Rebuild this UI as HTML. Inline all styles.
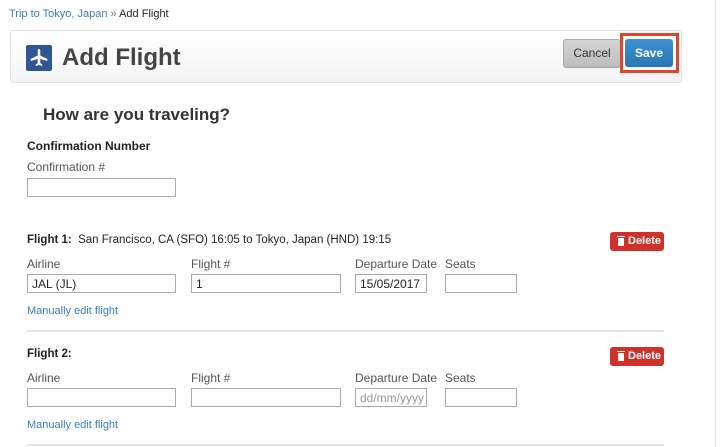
<!DOCTYPE html>
<html><head><style>
*{box-sizing:border-box;margin:0;padding:0}
body{width:720px;height:447px;overflow:hidden;background:#fff;font-family:"Liberation Sans",sans-serif;color:#222;position:relative}
.a{position:absolute;white-space:nowrap}
.lnk{color:#3a7fc4}
.inp{position:absolute;height:19px;border:1px solid #aaa;background:#fff;font-size:12px;padding:2px 4px;line-height:14px}
.lbl{position:absolute;font-size:12px;color:#555}
.del{position:absolute;width:54px;height:19px;background:#d0322b;border-radius:3px;color:#fff;font-size:11px;font-weight:bold;line-height:19px;white-space:nowrap}
.del i{position:absolute;left:8px;top:6px;width:6px;height:8px;background:#fff;border-radius:0 0 1px 1px}
.del i:before{content:"";position:absolute;left:-1px;top:-2px;width:8px;height:1px;background:#fff}
.del span{position:absolute;left:18px;top:0}
.hr{position:absolute;left:27px;width:637px;height:2px;background:#e3e3e3}
</style></head><body>
<div class="a" style="left:9px;top:8px;font-size:11px"><span class="lnk">Trip to Tokyo, Japan</span> <span style="color:#777">»</span> Add Flight</div>
<div style="position:absolute;left:10px;top:30px;width:672px;height:53px;border:1px solid #e2e2e2;border-radius:3px;background:linear-gradient(#fff,#f4f4f4)"></div>
<div style="position:absolute;left:26px;top:45px;width:26px;height:26px;background:#2f5597;border-radius:2px">
<svg width="26" height="26" viewBox="0 0 26 26"><path d="M13 4c1 0 1.3 1 1.3 2v4.5l7 3.5v2l-7-2v4l2 1.5v1.5l-3.3-1-3.3 1v-1.5l2-1.5v-4l-7 2v-2l7-3.5V6c0-1 .3-2 1.3-2z" fill="#fff"/></svg></div>
<div class="a" style="left:62px;top:44px;font-size:24px;font-weight:bold;color:#444">Add Flight</div>
<div class="a" style="left:563px;top:39px;width:58px;height:29px;border:1px solid #a9a9a9;border-radius:3px;background:linear-gradient(#d4d4d4,#bdbdbd);font-size:12px;line-height:27px;text-align:center;color:#333">Cancel</div>
<div class="a" style="left:620px;top:33px;width:59px;height:40px;border:3px solid #e2452c"></div>
<div class="a" style="left:625px;top:39px;width:48px;height:28px;border-radius:3px;background:linear-gradient(#3e91cf,#2a77b5);font-size:12px;font-weight:bold;line-height:28px;text-align:center;color:#fff">Save</div>
<div style="position:absolute;left:715px;top:0;width:1px;height:447px;background:#e8e8e8"></div>
<div class="a" style="left:43px;top:105px;font-size:17px;font-weight:bold;color:#333">How are you traveling?</div>
<div class="a" style="left:27px;top:139px;font-size:12px;font-weight:bold">Confirmation Number</div>
<div class="lbl" style="left:27px;top:160px">Confirmation #</div>
<div class="inp" style="left:27px;top:178px;width:149px"></div>

<div class="a" style="left:27px;top:234px;font-size:11.5px"><b>Flight 1:</b>&nbsp; San Francisco, CA (SFO) 16:05 to Tokyo, Japan (HND) 19:15</div>
<div class="del" style="left:610px;top:232px"><i></i><span>Delete</span></div>
<div class="lbl" style="left:27px;top:257px">Airline</div>
<div class="lbl" style="left:191px;top:257px">Flight #</div>
<div class="lbl" style="left:355px;top:257px">Departure Date</div>
<div class="lbl" style="left:445px;top:257px">Seats</div>
<div class="inp" style="left:27px;top:274px;width:149px">JAL (JL)</div>
<div class="inp" style="left:191px;top:274px;width:150px">1</div>
<div class="inp" style="left:355px;top:274px;width:72px">15/05/2017</div>
<div class="inp" style="left:445px;top:274px;width:72px"></div>
<div class="a lnk" style="left:27px;top:305px;font-size:11px">Manually edit flight</div>
<div class="hr" style="top:330px"></div>

<div class="a" style="left:27px;top:348px;font-size:11.5px"><b>Flight 2:</b></div>
<div class="del" style="left:610px;top:347px"><i></i><span>Delete</span></div>
<div class="lbl" style="left:27px;top:371px">Airline</div>
<div class="lbl" style="left:191px;top:371px">Flight #</div>
<div class="lbl" style="left:355px;top:371px">Departure Date</div>
<div class="lbl" style="left:445px;top:371px">Seats</div>
<div class="inp" style="left:27px;top:388px;width:149px"></div>
<div class="inp" style="left:191px;top:388px;width:150px"></div>
<div class="inp" style="left:355px;top:388px;width:72px;color:#999">dd/mm/yyyy</div>
<div class="inp" style="left:445px;top:388px;width:72px"></div>
<div class="a lnk" style="left:27px;top:419px;font-size:11px">Manually edit flight</div>
<div class="hr" style="top:444px"></div>
</body></html>
